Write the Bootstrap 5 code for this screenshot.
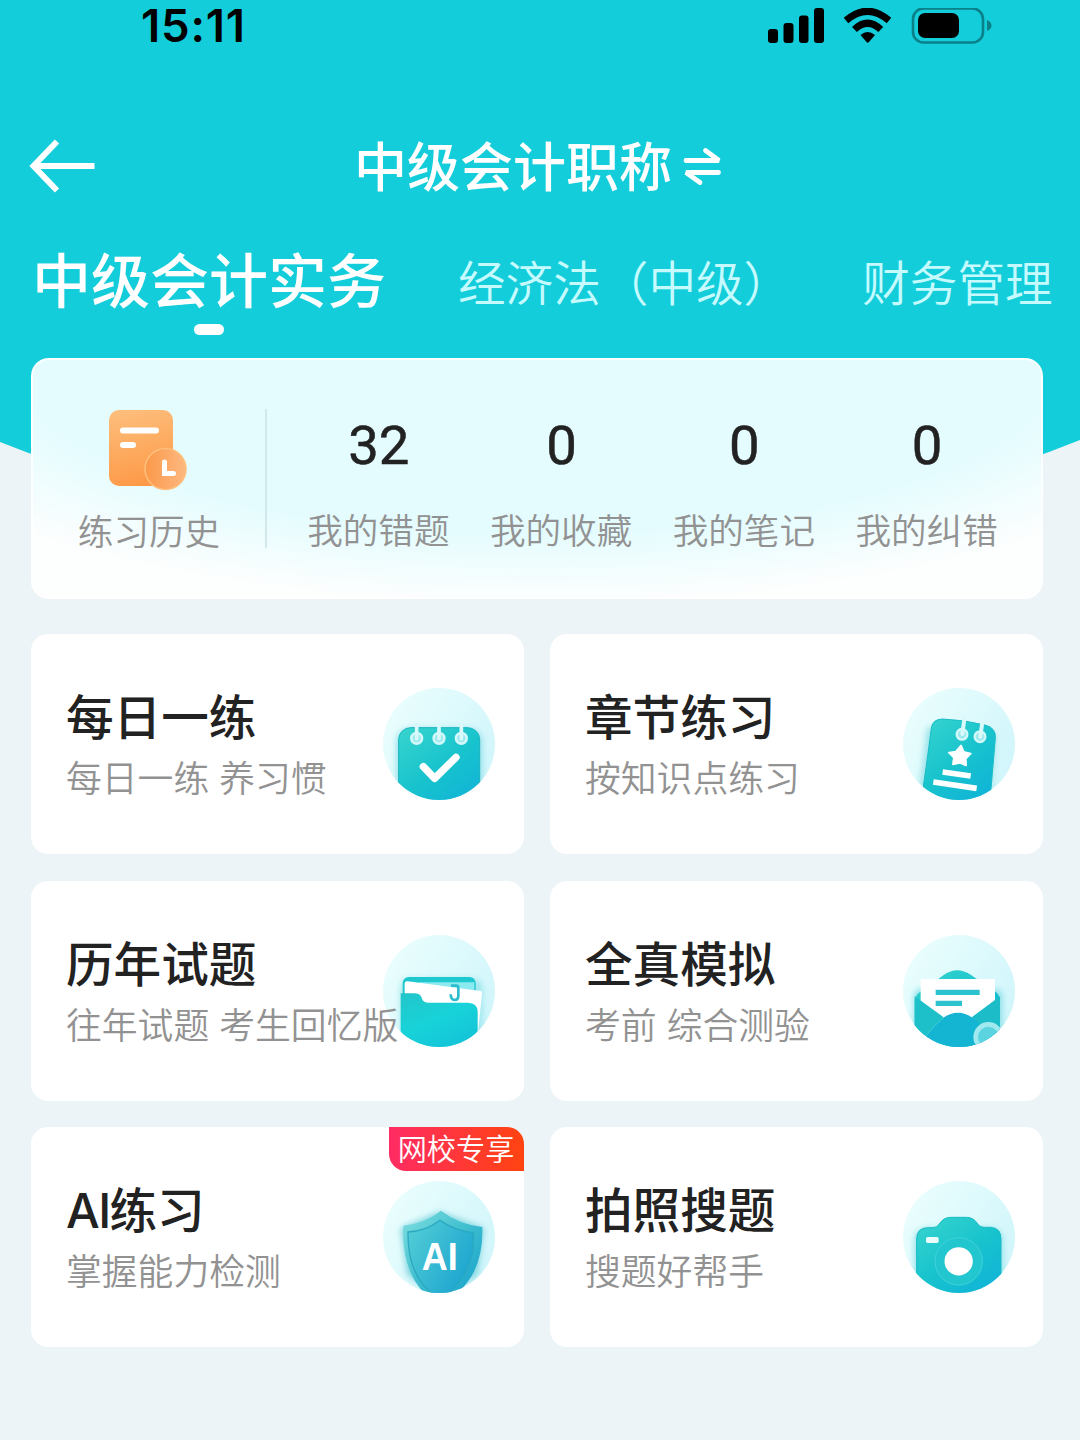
<!DOCTYPE html>
<html lang="zh-CN">
<head>
  <meta charset="UTF-8" />
  <meta name="viewport" content="width=device-width, initial-scale=1.0"/>
  <title>中级会计职称</title>
  <link href="https://cdn.jsdelivr.net/npm/bootstrap@5.3.3/dist/css/bootstrap.min.css" rel="stylesheet">
  <style>
    body {
      width: 1080px;
      height: 1440px;
      overflow: hidden;
      background: #ecf4f8;
      font-family: Inter, "Noto Sans CJK SC", sans-serif;
      color: #222;
    }

    svg {
      display: block;
      flex-shrink: 0;
    }

    .app-header {
      height: 560px;
      background: #14cdda;
      clip-path: path("M0 0H1080V440Q540 655 0 442Z");
    }

    .status-bar {
      height: 52px;
      padding: 0 88px 0 141px;
    }

    .status-time {
      font-size: 45.5px;
      font-weight: 600;
      line-height: 52px;
      color: #000;
      letter-spacing: 0.8px;
    }

    .title-bar {
      height: 68px;
      margin-top: 78px;
      padding: 0 29px;
      display: grid;
      grid-template-columns: 66px 1fr 66px;
      align-items: center;
    }

    .page-title {
      font-size: 53px;
      font-weight: 500;
      line-height: 68px;
      padding-top: 4px;
      margin-right: 10px;
    }

    .subject-tabs {
      height: 92px;
      margin-top: 43px;
      padding-left: 32px;
    }

    .subject-tabs .nav-link {
      padding: 0;
      font-size: 47.6px;
      font-weight: 350;
      line-height: 86px;
      color: #c5fbff;
      white-space: nowrap;
    }

    .subject-tabs .nav-link.active {
      font-size: 59px;
      font-weight: 500;
      line-height: 82px;
      color: #fff;
    }

    .tab-law { margin-left: 72px; }
    .tab-finance { margin-left: 71px; }

    .tab-line {
      width: 30px;
      height: 11px;
      margin-top: 1px;
      border-radius: 6px;
      background: #fff;
    }

    .app-main {
      margin-top: -202px;
      padding: 0 37px 0 31px;
      position: relative;
    }

    .stats-panel {
      height: 241px;
      border: 2px solid rgba(255, 255, 255, 0.8);
      border-radius: 18px;
      background: radial-gradient(ellipse 730px 245px at 50% 0, #e5fcfe 72%, #fdfefe 100%) border-box;
    }

    .history-item {
      width: 232px;
      padding-top: 49px;
    }

    .history-item svg { margin-bottom: 18px; margin-left: -3px; }

    .panel-line {
      width: 2px;
      height: 139px;
      margin-top: 49px;
      background: #d3e8ea;
    }

    .stat-list {
      flex: 1;
      padding: 51px 23px 0 20px;
    }

    .stat-number {
      font-family: Roboto, "Noto Sans CJK SC", sans-serif;
      font-size: 54.5px;
      font-weight: 400;
      line-height: 68px;
      padding-left: 1px;
      -webkit-text-stroke: 0.5px #222;
    }

    .stat-label {
      font-size: 35.6px;
      font-weight: 350;
      line-height: 48px;
      color: #929292;
      white-space: nowrap;
    }

    .stat-list .stat-label { margin-top: 29px; }

    .practice-grid {
      display: grid;
      grid-template-columns: 492.5px 493px;
      grid-auto-rows: 220px;
      gap: 26.5px;
      margin-top: 35px;
    }

    .practice-card {
      border: 0;
      border-radius: 17px;
      padding: 0 28.5px 0 35px;
    }

    .practice-text { width: 0; flex: 1; padding-top: 6px; position: relative; z-index: 1; }

    .practice-name {
      font-size: 47.6px;
      font-weight: 500;
      line-height: 60px;
      margin: 0 0 4px;
      white-space: nowrap;
    }

    .latin { letter-spacing: -1.6px; }

    .practice-desc {
      font-size: 35.8px;
      font-weight: 350;
      line-height: 54px;
      color: #929292;
      margin: 0;
      white-space: nowrap;
    }

    .vip-tag {
      top: 0;
      right: 0;
      width: 135px;
      height: 44px;
      border-radius: 0 17px 0 17px;
      background: linear-gradient(90deg, #ff2b63, #ff4310);
      color: #fff;
      font-size: 29.2px;
      font-weight: 350;
      line-height: 46px;
    }
  </style>
</head>
<body>

<!-- shared gradients for the round icons -->
<svg width="0" height="0" class="position-absolute" aria-hidden="true">
  <defs>
    <linearGradient id="disc" x1="0" y1="0.2" x2="1" y2="0.8">
      <stop offset="0" stop-color="#ebfefd"/><stop offset="1" stop-color="#cff5fb"/>
    </linearGradient>
    <linearGradient id="teal" x1="0.1" y1="0" x2="0.8" y2="1">
      <stop offset="0" stop-color="#35d3ce"/><stop offset="0.5" stop-color="#18c3cd"/><stop offset="1" stop-color="#0fb2d8"/>
    </linearGradient>
    <linearGradient id="folder" x1="0" y1="0" x2="0.6" y2="1">
      <stop offset="0" stop-color="#22c5c9"/><stop offset="0.5" stop-color="#17d3d9"/><stop offset="1" stop-color="#13c2d8"/>
    </linearGradient>
    <linearGradient id="shield" x1="0" y1="0" x2="1" y2="1">
      <stop offset="0" stop-color="#7fe0e0"/><stop offset="0.5" stop-color="#3dbdce"/><stop offset="1" stop-color="#149fcd"/>
    </linearGradient>
    <linearGradient id="shieldFace" x1="0" y1="0" x2="1" y2="0.6">
      <stop offset="0" stop-color="#55cfd6"/><stop offset="1" stop-color="#1ea6d0"/>
    </linearGradient>
    <linearGradient id="orange" x1="0.2" y1="0" x2="0.4" y2="1">
      <stop offset="0" stop-color="#fdbe7c"/><stop offset="1" stop-color="#fd9a48"/>
    </linearGradient>
    <linearGradient id="clock" x1="0" y1="0" x2="1" y2="0">
      <stop offset="0" stop-color="#fb994a"/><stop offset="1" stop-color="#fdb880"/>
    </linearGradient>
    <clipPath id="round"><circle cx="205" cy="206" r="168"/></clipPath>
    <filter id="glow" x="-20%" y="-20%" width="140%" height="140%"><feGaussianBlur stdDeviation="9"/></filter>
  </defs>
</svg>

<header class="app-header text-white">
  <div class="status-bar d-flex justify-content-between align-items-center">
    <span class="status-time">15:11</span>
    <svg width="224" height="36" viewBox="768 7 224 36">
      <rect x="768" y="28" width="10" height="14" rx="3"/>
      <rect x="783.5" y="22" width="10" height="20" rx="3"/>
      <rect x="799" y="14.500" width="9.500" height="27.500" rx="3"/>
      <rect x="814" y="7" width="10" height="35" rx="3"/>
      <path d="M846 19.500Q867.500 1 889 19.500" fill="none" stroke="#000" stroke-width="7"/>
      <path d="M854.500 28.500Q867.500 16 880.800 28.500" fill="none" stroke="#000" stroke-width="7"/>
      <path d="M860.500 34Q867.500 28 875 34L869 41Q867.700 42.500 866.500 41Z"/>
      <rect x="913" y="7.500" width="70" height="34" rx="10.500" fill="none" stroke="#0a8088" stroke-width="2.600"/>
      <rect x="918" y="12" width="41" height="25" rx="7"/>
      <path d="M987 19Q991.500 21 991.500 24.500T987 30Z" fill="#0a8088"/>
    </svg>
  </div>

  <div class="title-bar">
    <svg width="66" height="56" viewBox="29 138 66 56" fill="none" stroke="#fff">
      <path d="M57 141.500L33.500 166L57 190.500" stroke-width="6"/>
      <path d="M34 166H94.500" stroke-width="6"/>
    </svg>
    <div class="d-flex justify-content-center align-items-center pe-1">
      <span class="page-title">中级会计职称</span>
      <svg width="40" height="40" viewBox="683 146 40 40" fill="none" stroke="#fff" stroke-width="4.800" stroke-linecap="round" stroke-linejoin="bevel">
        <path d="M687 160.500H720L706.500 150.500"/>
        <path d="M719.500 172.500H687L701 182.500"/>
      </svg>
    </div>
  </div>

  <nav class="nav subject-tabs flex-nowrap align-items-start">
    <div class="d-flex flex-column align-items-center">
      <a class="nav-link active" href="#">中级会计实务</a>
      <span class="tab-line"></span>
    </div>
    <a class="nav-link tab-law" href="#">经济法（中级）</a>
    <a class="nav-link tab-finance" href="#">财务管理</a>
  </nav>
</header>

<main class="app-main">
  <section class="stats-panel d-flex">
    <div class="history-item d-flex flex-column align-items-center">
      <svg width="80" height="82" viewBox="108 409 80 82">
        <rect x="109" y="410" width="64" height="76" rx="10" fill="url(#orange)"/>
        <path d="M123 430.500H156M123 445H133" stroke="#fff" stroke-width="6" stroke-linecap="round"/>
        <circle cx="165.500" cy="469" r="20.500" fill="url(#clock)" stroke="#fec07c" stroke-width="1.500"/>
        <path d="M164.500 462V473.500H173.500" fill="none" stroke="#fff" stroke-width="5" stroke-linecap="round"/>
      </svg>
      <div class="stat-label">练习历史</div>
    </div>
    <div class="panel-line"></div>
    <div class="stat-list">
      <div class="row row-cols-4 g-0 text-center">
        <div class="col">
          <div class="stat-number">32</div>
          <div class="stat-label">我的错题</div>
        </div>
        <div class="col">
          <div class="stat-number">0</div>
          <div class="stat-label">我的收藏</div>
        </div>
        <div class="col">
          <div class="stat-number">0</div>
          <div class="stat-label">我的笔记</div>
        </div>
        <div class="col">
          <div class="stat-number">0</div>
          <div class="stat-label">我的纠错</div>
        </div>
      </div>
    </div>
  </section>

  <section class="practice-grid">
    <div class="card practice-card flex-row align-items-center">
      <div class="practice-text">
        <h2 class="practice-name">每日一练</h2>
        <p class="practice-desc">每日一练 养习惯</p>
      </div>
      <svg width="112" height="112" viewBox="37 38 336 336">
        <circle cx="205" cy="206" r="168" fill="url(#disc)"/>
        <g clip-path="url(#round)">
          <rect x="78" y="160" width="256" height="220" rx="38" fill="#8fdfe8" filter="url(#glow)"/>
          <rect x="84" y="157" width="243" height="260" rx="36" fill="url(#teal)" stroke="#19b5bf" stroke-width="3"/>
          <g fill="#9be9ee" stroke="#d2f8fa" stroke-width="8">
            <circle cx="138" cy="189" r="16"/><circle cx="205" cy="189" r="16"/><circle cx="272" cy="189" r="16"/>
          </g>
          <path d="M138 147V190M205 147V190M272 147V190" stroke="#d9f9fb" stroke-width="11" stroke-linecap="round"/>
          <path d="M158 274L192 309L256 246" fill="none" stroke="#fff" stroke-width="22" stroke-linecap="round" stroke-linejoin="round"/>
        </g>
      </svg>
    </div>

    <div class="card practice-card flex-row align-items-center">
      <div class="practice-text">
        <h2 class="practice-name">章节练习</h2>
        <p class="practice-desc">按知识点练习</p>
      </div>
      <svg width="112" height="112" viewBox="37 38 336 336">
        <circle cx="205" cy="206" r="168" fill="url(#disc)"/>
        <g clip-path="url(#round)">
          <path d="M110 155L315 180L298 390H80Z" fill="#9ae3ea" filter="url(#glow)"/>
          <path d="M122 158Q126 131 156 131Q220 133 286 150Q316 158 314 188L296 400H88Q108 270 122 158Z" fill="url(#teal)" stroke="#19bdc5" stroke-width="3"/>
          <g fill="#9be9ee" stroke="#d2f8fa" stroke-width="7">
            <circle cx="214" cy="177" r="16"/><circle cx="268" cy="184" r="16"/>
          </g>
          <path d="M221 131L215 176M275 140L269 184" stroke="#d9f9fb" stroke-width="12" stroke-linecap="round"/>
          <path d="M211 211L219 230L240 235L225 250L226 270L207 262L187 267L190 247L175 232L196 229Z" fill="#fff" stroke="#fff" stroke-width="6" stroke-linejoin="round"/>
          <path d="M156 290L240 302M128 320L258 339" stroke="#fff" stroke-width="17"/>
        </g>
      </svg>
    </div>

    <div class="card practice-card flex-row align-items-center">
      <div class="practice-text">
        <h2 class="practice-name">历年试题</h2>
        <p class="practice-desc">往年试题 考生回忆版</p>
      </div>
      <svg width="112" height="112" viewBox="37 38 336 336">
        <circle cx="205" cy="206" r="168" fill="url(#disc)"/>
        <g clip-path="url(#round)">
          <rect x="90" y="170" width="246" height="220" rx="25" fill="#9ee7ee" filter="url(#glow)"/>
          <rect x="96" y="164" width="219" height="190" rx="18" fill="#1fc8ce"/>
          <path d="M145 180H311V215H145Z" fill="#8beaf0"/>
          <path d="M102 184Q102 177 111 177L330 206Q335 207 334 214L322 330H102Z" fill="#fff"/>
          <path d="M241 190H257Q263 190 263 198V222Q263 233 252 233Q240 232 240 216" fill="none" stroke="#2bbdcc" stroke-width="8"/>
          <path d="M90 213H130Q149 213 153 226Q156 241 175 241H292Q320 242 321 267V400H90Z" fill="url(#folder)"/>
        </g>
      </svg>
    </div>

    <div class="card practice-card flex-row align-items-center">
      <div class="practice-text">
        <h2 class="practice-name">全真模拟</h2>
        <p class="practice-desc">考前 综合测验</p>
      </div>
      <svg width="112" height="112" viewBox="37 38 336 336">
        <circle cx="205" cy="206" r="168" fill="url(#disc)"/>
        <g clip-path="url(#round)">
          <rect x="70" y="200" width="265" height="180" rx="20" fill="#8de0e8" filter="url(#glow)"/>
          <path d="M72 235Q74 217 92 207L160 157Q200 130 240 157L312 207Q328 217 328 235V390H72Z" fill="url(#teal)"/>
          <path d="M90 170H313V241L244 287H158L90 241Z" fill="#fff"/>
          <path d="M135 210H267M135 243H214" stroke="#2cc3cf" stroke-width="16"/>
          <path d="M72 222L158 284L112 345L72 330Z" fill="#1dbfc9"/>
          <path d="M328 222L244 284L285 345L328 330Z" fill="#1dbcc9"/>
          <path d="M98 350Q130 308 158 286Q202 256 245 286Q275 308 310 350V390H98Z" fill="#14b4d3"/>
          <path d="M104 343Q132 307 158 286" fill="none" stroke="#3fd0d8" stroke-width="3"/>
          <circle cx="293" cy="344" r="38" fill="#5bd4e0" stroke="#a0e9ef" stroke-width="14"/>
        </g>
      </svg>
    </div>

    <div class="card practice-card flex-row align-items-center">
      <span class="vip-tag position-absolute text-center">网校专享</span>
      <div class="practice-text">
        <h2 class="practice-name"><span class="latin">AI</span>练习</h2>
        <p class="practice-desc">掌握能力检测</p>
      </div>
      <svg width="112" height="112" viewBox="37 38 336 336">
        <circle cx="205" cy="206" r="168" fill="url(#disc)"/>
        <g clip-path="url(#round)">
          <path d="M90 180L208 130L340 180L320 320L208 390L110 320Z" fill="#7fd4df" filter="url(#glow)"/>
          <path d="M211 127Q264 168 335 176Q340 320 240 390H178Q92 320 98 172Q164 165 211 127Z" fill="url(#shield)"/>
          <path d="M208 156Q254 188 308 193Q315 310 230 378H188Q110 320 112 191Q166 189 208 156Z" fill="url(#shieldFace)" stroke="#2aa9c1" stroke-width="4"/>
          <text x="153" y="305" textLength="108" lengthAdjust="spacingAndGlyphs" font-family="Liberation Sans, sans-serif" font-weight="700" font-size="118" fill="#fff">AI</text>
        </g>
      </svg>
    </div>

    <div class="card practice-card flex-row align-items-center">
      <div class="practice-text">
        <h2 class="practice-name">拍照搜题</h2>
        <p class="practice-desc">搜题好帮手</p>
      </div>
      <svg width="112" height="112" viewBox="37 38 336 336">
        <circle cx="205" cy="206" r="168" fill="url(#disc)"/>
        <g clip-path="url(#round)">
          <rect x="72" y="180" width="264" height="200" rx="35" fill="#8de0e8" filter="url(#glow)"/>
          <path d="M78 212Q78 178 112 178H127Q139 178 146 167Q158 147 180 147H227Q248 147 259 164Q267 177 282 177H300Q331 179 331 212V400H78Z" fill="url(#teal)" stroke="#19bac3" stroke-width="3"/>
          <rect x="106" y="206" width="38" height="18" rx="5" fill="#e8fcfd"/>
          <circle cx="204" cy="279" r="57" fill="#fff" stroke="#22c6cf" stroke-width="29"/>
          <circle cx="204" cy="279" r="71" fill="none" stroke="#41d2d9" stroke-width="3"/>
        </g>
      </svg>
    </div>
  </section>
</main>

<script src="https://cdn.jsdelivr.net/npm/bootstrap@5.3.3/dist/js/bootstrap.bundle.min.js"></script>
</body>
</html>
